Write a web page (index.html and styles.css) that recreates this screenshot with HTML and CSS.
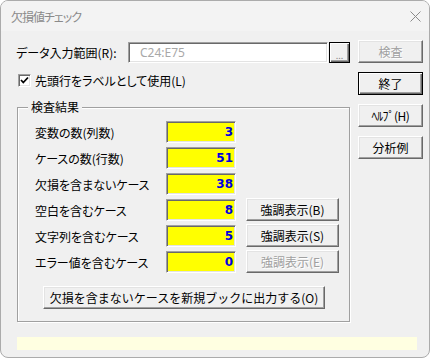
FILE: index.html
```html
<!DOCTYPE html>
<html lang="ja">
<head>
<meta charset="utf-8">
<title>欠損値チェック</title>
<link rel="stylesheet" href="styles.css">
</head>
<body>
<div class="window">
  <div class="titlebar">
    <span class="title">欠損値チェック</span>
    <svg class="close" viewBox="0 0 11 11" width="11" height="11"><path d="M0.5 0.5 L10.5 10.5 M10.5 0.5 L0.5 10.5" stroke="#8a8a8a" stroke-width="1" fill="none"/></svg>
  </div>
  <div class="client">
    <div class="top">
      <div class="main">
        <div class="range-row">
          <span class="range-label">データ入力範囲(R):</span>
          <div class="field textbox">C24:E75</div>
          <button class="btn default browse">...</button>
        </div>
        <div class="check-row">
          <span class="checkbox"><svg viewBox="0 0 11 11" width="11" height="11"><polyline points="2,5 4.3,7.5 9,2.5" stroke="#000" stroke-width="1.8" fill="none"/></svg></span>
          <span class="check-label">先頭行をラベルとして使用(L)</span>
        </div>
        <fieldset class="group">
          <legend>検査結果</legend>
          <div class="rows">
            <div class="row"><span class="row-label">変数の数(列数)</span><div class="field value">3</div></div>
            <div class="row"><span class="row-label">ケースの数(行数)</span><div class="field value">51</div></div>
            <div class="row"><span class="row-label">欠損を含まないケース</span><div class="field value">38</div></div>
            <div class="row"><span class="row-label">空白を含むケース</span><div class="field value">8</div><button class="btn hl">強調表示(B)</button></div>
            <div class="row"><span class="row-label">文字列を含むケース</span><div class="field value">5</div><button class="btn hl">強調表示(S)</button></div>
            <div class="row"><span class="row-label">エラー値を含むケース</span><div class="field value">0</div><button class="btn hl" disabled>強調表示(E)</button></div>
          </div>
          <button class="btn export">欠損を含まないケースを新規ブックに出力する(O)</button>
        </fieldset>
      </div>
      <div class="side">
        <button class="btn side-btn" disabled>検査</button>
        <button class="btn default side-btn">終了</button>
        <button class="btn side-btn help">ﾍﾙﾌﾟ(H)</button>
        <button class="btn side-btn">分析例</button>
      </div>
    </div>
    <div class="status"></div>
  </div>
</div>
</body>
</html>
```
FILE: styles.css
```css
* { box-sizing: border-box; }

body {
  margin: 0;
  background: #ffffff;
  font-family: "Noto Sans CJK JP", "Noto Sans", sans-serif;
  font-size: 12px;
  color: #000;
  font-feature-settings: "palt";
}

.window {
  width: 430px;
  height: 358px;
  border: 1px solid #ababab;
  border-radius: 8px;
  background: #f0f0f0;
  overflow: hidden;
}

.titlebar {
  height: 30px;
  background: #f3f3f3;
  display: flex;
  align-items: center;
  justify-content: space-between;
  padding: 0 8px 0 10px;
}

.title {
  color: #8a8a8a;
  font-size: 12px;
  letter-spacing: -1px;
}

.close { display: block; }

.client {
  padding: 9px 0 0 15px;
}

.top {
  display: flex;
  gap: 8px;
}

.main {
  width: 334px;
}

.range-row {
  display: flex;
  align-items: center;
  height: 21px;
  margin-top: 2px;
}

.range-label {
  width: 112px;
  flex: none;
}

.field {
  border: 1px solid;
  border-color: #a0a0a0 #ffffff #ffffff #a0a0a0;
  box-shadow: inset 1px 1px 0 #696969, inset -1px -1px 0 #e3e3e3;
}

.textbox {
  width: 200px;
  height: 21px;
  background: #ffffff;
  color: #a8a8a8;
  font-family: "Noto Sans", sans-serif;
  font-size: 12px;
  line-height: 19px;
  padding-left: 11px;
}

.btn {
  font-family: inherit;
  font-size: 12px;
  color: #000;
  background: #f0f0f0;
  border: 1px solid;
  border-color: #ffffff #696969 #696969 #ffffff;
  box-shadow: inset -1px -1px 0 #a0a0a0, inset 1px 1px 0 #e3e3e3;
  padding: 0;
  margin: 0;
  line-height: 1;
}

.btn.default {
  border: 1px solid #000;
  box-shadow: inset 1px 1px 0 #ffffff, inset -1px -1px 0 #696969, inset -2px -2px 0 #a0a0a0;
}

.btn:disabled {
  color: #a0a0a0;
  background: #f0f0f0;
  text-shadow: 1px 1px 0 #ffffff;
}

.browse {
  width: 21px;
  height: 21px;
  margin-left: 1px;
  color: #8a8a8a;
  font-size: 9px;
  padding-top: 6px;
  flex: none;
}

.check-row {
  display: flex;
  align-items: center;
  height: 13px;
  margin-top: 11px;
  padding-left: 2px;
  gap: 4px;
}

.checkbox {
  width: 13px;
  height: 13px;
  background: #ffffff;
  border: 1px solid;
  border-color: #a0a0a0 #ffffff #ffffff #a0a0a0;
  box-shadow: inset 1px 1px 0 #696969, inset -1px -1px 0 #e3e3e3;
  display: flex;
  align-items: center;
  justify-content: center;
}

.checkbox svg { display: block; }

.group {
  margin: 13px 0 0 1px;
  width: 333px;
  min-width: 0;
  padding: 7px 0 12px 17px;
  border: 1px solid #a0a0a0;
  box-shadow: inset 1px 1px 0 #ffffff, 1px 1px 0 #ffffff;
}

.group legend {
  padding: 0 3px;
  margin-left: -7px;
  line-height: 14px;
  background: #f0f0f0;
}

.rows {
  display: flex;
  flex-direction: column;
  gap: 4px;
}

.row {
  display: grid;
  grid-template-columns: 121px 70px 93px;
  column-gap: 10px;
  align-items: center;
  height: 22px;
}

.value {
  height: 22px;
  background: #ffff00;
  text-align: right;
  padding-right: 2px;
  font-family: "DejaVu Sans", sans-serif;
  font-weight: bold;
  font-size: 12px;
  line-height: 20px;
  color: #0000e0;
}

.hl {
  height: 23px;
  margin-top: -1px;
  align-self: start;
}

.export {
  display: block;
  width: 282px;
  height: 23px;
  margin: 13px 0 0 8px;
}

.side {
  display: flex;
  flex-direction: column;
  gap: 9px;
  width: 65px;
}

.side-btn {
  height: 23px;
}

.help {
  letter-spacing: -0.5px;
}

.status {
  margin: 15px 0 0 1px;
  width: 400px;
  height: 13px;
  background: #ffffe1;
}
```
